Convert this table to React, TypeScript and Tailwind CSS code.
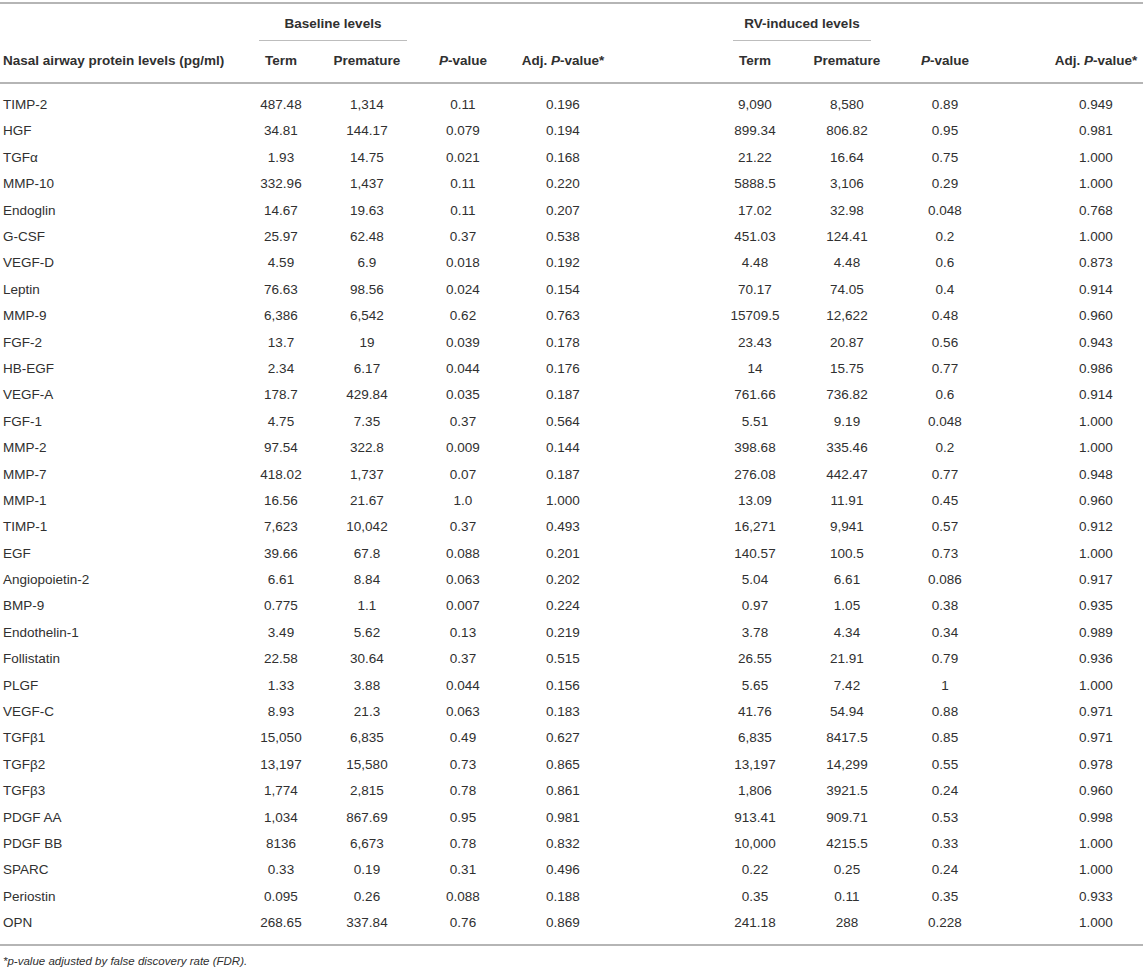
const rows: string[][] = [
  ['TIMP-2', '487.48', '1,314', '0.11', '0.196', '9,090', '8,580', '0.89', '0.949'],
  ['HGF', '34.81', '144.17', '0.079', '0.194', '899.34', '806.82', '0.95', '0.981'],
  ['TGFα', '1.93', '14.75', '0.021', '0.168', '21.22', '16.64', '0.75', '1.000'],
  ['MMP-10', '332.96', '1,437', '0.11', '0.220', '5888.5', '3,106', '0.29', '1.000'],
  ['Endoglin', '14.67', '19.63', '0.11', '0.207', '17.02', '32.98', '0.048', '0.768'],
  ['G-CSF', '25.97', '62.48', '0.37', '0.538', '451.03', '124.41', '0.2', '1.000'],
  ['VEGF-D', '4.59', '6.9', '0.018', '0.192', '4.48', '4.48', '0.6', '0.873'],
  ['Leptin', '76.63', '98.56', '0.024', '0.154', '70.17', '74.05', '0.4', '0.914'],
  ['MMP-9', '6,386', '6,542', '0.62', '0.763', '15709.5', '12,622', '0.48', '0.960'],
  ['FGF-2', '13.7', '19', '0.039', '0.178', '23.43', '20.87', '0.56', '0.943'],
  ['HB-EGF', '2.34', '6.17', '0.044', '0.176', '14', '15.75', '0.77', '0.986'],
  ['VEGF-A', '178.7', '429.84', '0.035', '0.187', '761.66', '736.82', '0.6', '0.914'],
  ['FGF-1', '4.75', '7.35', '0.37', '0.564', '5.51', '9.19', '0.048', '1.000'],
  ['MMP-2', '97.54', '322.8', '0.009', '0.144', '398.68', '335.46', '0.2', '1.000'],
  ['MMP-7', '418.02', '1,737', '0.07', '0.187', '276.08', '442.47', '0.77', '0.948'],
  ['MMP-1', '16.56', '21.67', '1.0', '1.000', '13.09', '11.91', '0.45', '0.960'],
  ['TIMP-1', '7,623', '10,042', '0.37', '0.493', '16,271', '9,941', '0.57', '0.912'],
  ['EGF', '39.66', '67.8', '0.088', '0.201', '140.57', '100.5', '0.73', '1.000'],
  ['Angiopoietin-2', '6.61', '8.84', '0.063', '0.202', '5.04', '6.61', '0.086', '0.917'],
  ['BMP-9', '0.775', '1.1', '0.007', '0.224', '0.97', '1.05', '0.38', '0.935'],
  ['Endothelin-1', '3.49', '5.62', '0.13', '0.219', '3.78', '4.34', '0.34', '0.989'],
  ['Follistatin', '22.58', '30.64', '0.37', '0.515', '26.55', '21.91', '0.79', '0.936'],
  ['PLGF', '1.33', '3.88', '0.044', '0.156', '5.65', '7.42', '1', '1.000'],
  ['VEGF-C', '8.93', '21.3', '0.063', '0.183', '41.76', '54.94', '0.88', '0.971'],
  ['TGFβ1', '15,050', '6,835', '0.49', '0.627', '6,835', '8417.5', '0.85', '0.971'],
  ['TGFβ2', '13,197', '15,580', '0.73', '0.865', '13,197', '14,299', '0.55', '0.978'],
  ['TGFβ3', '1,774', '2,815', '0.78', '0.861', '1,806', '3921.5', '0.24', '0.960'],
  ['PDGF AA', '1,034', '867.69', '0.95', '0.981', '913.41', '909.71', '0.53', '0.998'],
  ['PDGF BB', '8136', '6,673', '0.78', '0.832', '10,000', '4215.5', '0.33', '1.000'],
  ['SPARC', '0.33', '0.19', '0.31', '0.496', '0.22', '0.25', '0.24', '1.000'],
  ['Periostin', '0.095', '0.26', '0.088', '0.188', '0.35', '0.11', '0.35', '0.933'],
  ['OPN', '268.65', '337.84', '0.76', '0.869', '241.18', '288', '0.228', '1.000'],
];

// label | term | premature | p | adj | gap | term | premature | p | gap | adj
const grid =
  'grid grid-cols-[238px_86px_86px_106px_94px_90px_110px_74px_122px_43px_94px] items-center';

function PValue() {
  return (
    <>
      <i>P</i>-value
    </>
  );
}

function AdjPValue() {
  return (
    <>
      Adj. <i>P</i>-value*
    </>
  );
}

export default function App() {
  return (
    <div className="w-[1143px] h-[970px] bg-white text-[#303030] text-[13.5px] font-['Liberation_Sans',Arial,sans-serif] pt-[2px] overflow-hidden">
      <div className="border-t-2 border-[#b5b5b5]" />

      {/* group headers */}
      <div className="flex h-[37px] items-end font-bold">
        <div className="ml-[259px] w-[148px] flex flex-col items-center">
          <span className="leading-[16px]">Baseline levels</span>
          <div className="mt-[8px] w-full border-t border-[#bdbdbd]" />
        </div>
        <div className="ml-[326px] w-[138px] flex flex-col items-center">
          <span className="leading-[16px]">RV-induced levels</span>
          <div className="mt-[8px] w-full border-t border-[#bdbdbd]" />
        </div>
      </div>

      {/* column headers */}
      <div className={`${grid} h-[41px] font-bold whitespace-nowrap`}>
        <div className="pl-[3px]">Nasal airway protein levels (pg/ml)</div>
        <div className="text-center">Term</div>
        <div className="text-center">Premature</div>
        <div className="text-center"><PValue /></div>
        <div className="text-center"><AdjPValue /></div>
        <div className="col-start-7 text-center">Term</div>
        <div className="text-center">Premature</div>
        <div className="text-center"><PValue /></div>
        <div className="col-start-11 text-center"><AdjPValue /></div>
      </div>
      <div className="border-t-2 border-[#b5b5b5]" />

      {/* body */}
      <div className="pt-[8px] pb-[7px]">
        {rows.map((r) => (
          <div key={r[0]} className={`${grid} h-[26.4px] whitespace-nowrap`}>
            <div className="pl-[3px]">{r[0]}</div>
            <div className="text-center">{r[1]}</div>
            <div className="text-center">{r[2]}</div>
            <div className="text-center">{r[3]}</div>
            <div className="text-center">{r[4]}</div>
            <div className="col-start-7 text-center">{r[5]}</div>
            <div className="text-center">{r[6]}</div>
            <div className="text-center">{r[7]}</div>
            <div className="col-start-11 text-center">{r[8]}</div>
          </div>
        ))}
      </div>
      <div className="border-t-2 border-[#b5b5b5]" />

      <p className="pl-[3px] pt-[7px] text-[11.5px] italic">
        *p-value adjusted by false discovery rate (FDR).
      </p>
    </div>
  );
}
